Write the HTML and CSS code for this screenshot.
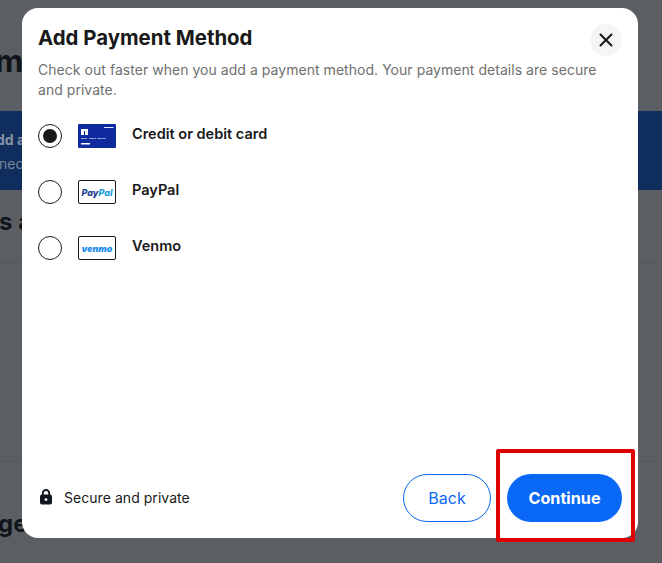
FILE: index.html
```html
<!DOCTYPE html>
<html>
<head>
  <title>Add Payment Method</title>
  <link rel="stylesheet" href="styles.css">
</head>
<body>

  <!-- page behind the dialog -->
  <div class="page">
    <div class="page-title">me</div>
    <div class="banner">
      <div class="banner-strong">dd a</div>
      <div class="banner-text">nec</div>
    </div>
    <div class="section-title">s a</div>
    <div class="section-body"></div>
    <div class="section-title section-last">ge</div>
  </div>

  <div class="modal">
    <div class="modal-head">
      <h2>Add Payment Method</h2>
      <button class="close" type="button" aria-label="Close">
        <svg width="14" height="14" viewBox="0 0 14 14"><path d="M1.5 1.5l11 11M12.5 1.5l-11 11" stroke="#191919" stroke-width="2" stroke-linecap="round"/></svg>
      </button>
    </div>
    <p class="intro">Check out faster when you add a payment method. Your payment details are secure and private.</p>

    <div class="methods">
      <label class="method">
        <span class="radio checked"></span>
        <svg class="logo" width="38" height="24" viewBox="0 0 38 24">
          <rect width="38" height="24" rx="1" fill="#0f2a9c"/>
          <rect x="26" y="3" width="9.5" height="1" fill="#dfe3f5"/>
          <rect x="3" y="5" width="7" height="6" fill="#fff"/>
          <rect x="6" y="7" width="1" height="4" fill="#0f2a9c"/>
          <rect x="3" y="14" width="6" height="1" fill="#8f9bd6"/>
          <rect x="11" y="14" width="7" height="1" fill="#8f9bd6"/>
          <rect x="19" y="14" width="9" height="1" fill="#8f9bd6"/>
          <rect x="3" y="19" width="9" height="1.5" fill="#fff"/>
        </svg>
        <span>Credit or debit card</span>
      </label>
      <label class="method">
        <span class="radio"></span>
        <span class="logo logo-box paypal"><i>Pay</i><i>Pal</i></span>
        <span>PayPal</span>
      </label>
      <label class="method">
        <span class="radio"></span>
        <span class="logo logo-box venmo">venmo</span>
        <span>Venmo</span>
      </label>
    </div>

    <div class="modal-foot">
      <div class="secure">
        <svg width="14" height="16" viewBox="0 0 14 16"><path d="M3.8 6V4.2a3.2 3.2 0 0 1 6.4 0V6" fill="none" stroke="#111820" stroke-width="1.9"/><rect x="1" y="5.6" width="12" height="10" rx="2" fill="#111820"/><circle cx="7" cy="10.6" r="1.4" fill="#fff"/></svg>
        <span>Secure and private</span>
      </div>
      <div class="actions">
        <button class="btn btn-back" type="button">Back</button>
        <button class="btn btn-continue" type="button">Continue</button>
      </div>
    </div>
  </div>

  <!-- annotation drawn on the screenshot -->
  <div class="highlight"></div>

</body>
</html>
```

FILE: styles.css
```css
* {
  box-sizing: border-box;
}

html, body {
  height: 100%;
}

body {
  margin: 0;
  background: #5b5f63;
  font-family: Inter, 'Liberation Sans', sans-serif;
  color: #191919;
  overflow: hidden;
}

.page {
  height: 563px;
  overflow: hidden;
  color: #10151c;
  font-weight: 700;
}

.page-title {
  font-size: 31px;
  line-height: 36px;
  margin: 43px 0 0 -5px;
}

.banner {
  margin-top: 32px;
  height: 79px;
  background: #0f2e5e;
  font-size: 14px;
  line-height: 24px;
  padding: 17px 0 0 0;
}

.banner-strong {
  margin-left: -4px;
  color: #8591a5;
}

.banner-text {
  margin-left: -1px;
  color: #76859c;
  font-weight: 400;
}

.section-title {
  font-size: 24px;
  line-height: 28px;
  margin: 18px 0 0 -1px;
}

.section-body {
  margin-top: 26px;
  height: 200px;
  border-top: 1px solid #54585c;
  border-bottom: 1px solid #54585c;
}

.section-last {
  margin: 48px 0 0 -2px;
}

.modal {
  position: absolute;
  left: 22px;
  top: 8px;
  width: 616px;
  height: 530px;
  background: #fff;
  border-radius: 16px;
  padding: 16px;
  display: flex;
  flex-direction: column;
}

.modal-head {
  display: flex;
  justify-content: space-between;
  align-items: flex-start;
}

h2 {
  margin: 0;
  font-size: 20.4px;
  line-height: 28px;
  font-weight: 700;
}

.close {
  width: 32px;
  height: 32px;
  border: none;
  border-radius: 50%;
  background: #f5f5f5;
  padding: 0;
  display: flex;
  align-items: center;
  justify-content: center;
}

.intro {
  margin: 4px 0 0 0;
  font-size: 14px;
  line-height: 20px;
  letter-spacing: 0.04px;
  color: #707070;
  max-width: 562px;
}

.methods {
  display: flex;
  flex-direction: column;
  gap: 32px;
  margin-top: 24px;
  flex: 1;
}

.method {
  display: flex;
  align-items: center;
  height: 24px;
  font-size: 14.5px;
  font-weight: 600;
}

.radio {
  width: 24px;
  height: 24px;
  border: 1px solid #191919;
  border-radius: 50%;
  margin-right: 16px;
  flex: none;
  display: flex;
  align-items: center;
  justify-content: center;
}

.radio.checked::after {
  content: "";
  width: 14px;
  height: 14px;
  border-radius: 50%;
  background: #191919;
}

.logo {
  width: 38px;
  height: 24px;
  margin-right: 16px;
  flex: none;
}

.method > span:last-child {
  margin-top: -5px;
}

.logo-box {
  border: 1px solid #191919;
  border-radius: 2px;
  display: flex;
  align-items: center;
  justify-content: center;
  font-size: 9px;
  font-weight: 800;
  font-style: italic;
  padding-top: 1px;
}

.paypal i:first-child {
  color: #1c3f94;
}

.paypal i:last-child {
  color: #1a9ddb;
}

.venmo {
  color: #1b8cf0;
  font-size: 9px;
  font-weight: 900;
}

.modal-foot {
  display: flex;
  justify-content: space-between;
  align-items: center;
}

.secure {
  display: flex;
  align-items: center;
  gap: 11px;
  font-size: 14px;
  letter-spacing: 0.05px;
  margin: -2px 0 0 1px;
}

.actions {
  display: flex;
  gap: 16px;
}

.btn {
  height: 48px;
  border-radius: 24px;
  font-family: inherit;
  font-size: 16px;
  padding: 0;
}

.btn-back {
  width: 88px;
  background: #fff;
  border: 1px solid #0968f6;
  color: #0968f6;
}

.btn-continue {
  width: 115px;
  background: #0968f6;
  border: none;
  color: #fff;
  font-weight: 700;
  font-size: 16.2px;
}

.highlight {
  position: absolute;
  left: 496px;
  top: 449px;
  width: 139px;
  height: 93px;
  border: 4px solid #e00000;
  border-radius: 2px;
}
```
